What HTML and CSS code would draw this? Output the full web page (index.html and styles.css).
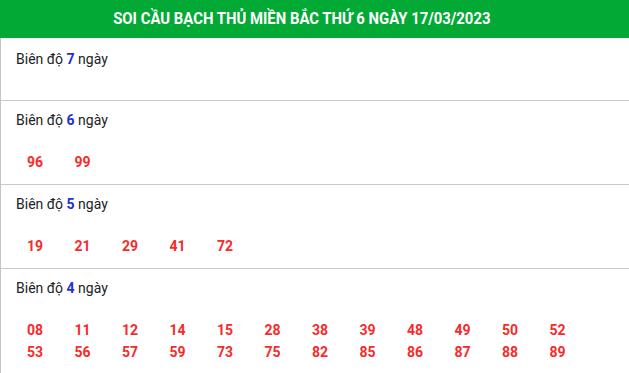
FILE: index.html
```html
<!DOCTYPE html>
<html lang="vi">
<head>
<meta charset="utf-8">
<link rel="stylesheet" href="styles.css">
</head>
<body>
<div class="box">
  <div class="head"><h2 class="title">SOI CẦU BẠCH THỦ MIỀN BẮC THỨ 6 NGÀY 17/03/2023</h2></div>
  <div class="row row-first">
    <div class="label">Biên độ <b>7</b> ngày</div>
    <div class="nums"></div>
  </div>
  <div class="row">
    <div class="label">Biên độ <b>6</b> ngày</div>
    <div class="nums"><span>96</span><span>99</span></div>
  </div>
  <div class="row">
    <div class="label">Biên độ <b>5</b> ngày</div>
    <div class="nums"><span>19</span><span>21</span><span>29</span><span>41</span><span>72</span></div>
  </div>
  <div class="row">
    <div class="label">Biên độ <b>4</b> ngày</div>
    <div class="nums">
      <span>08</span><span>11</span><span>12</span><span>14</span><span>15</span><span>28</span><span>38</span><span>39</span><span>48</span><span>49</span><span>50</span><span>52</span>
      <span>53</span><span>56</span><span>57</span><span>59</span><span>73</span><span>75</span><span>82</span><span>85</span><span>86</span><span>87</span><span>88</span><span>89</span>
    </div>
  </div>
</div>
</body>
</html>
```
FILE: styles.css
```css
html, body {
  margin: 0;
  padding: 0;
  background: #fff;
}
body {
  font-family: Roboto, "Liberation Sans", Arial, sans-serif;
  color: #222;
}
.box {
  border-left: 1px solid #c4c4c4;
}
.head {
  background: #02a935;
  height: 38px;
  display: flex;
  align-items: center;
  justify-content: center;
  padding-right: 26px;
  margin-left: -1px;
}
.title {
  margin: 0;
  color: #fff;
  font-size: 16px;
  font-weight: 700;
  line-height: 20px;
  transform: scaleX(0.93);
  white-space: nowrap;
}
.row {
  padding: 9px 0 11px;
  border-bottom: 1px solid #c8c8c8;
}
.row-first {
  padding: 11px 0 10px;
}
.label {
  font-size: 14px;
  line-height: 20px;
  padding-left: 15px;
  color: #222;
}
.label b {
  color: #1c2fd8;
  font-weight: 700;
}
.nums {
  margin-top: 21px;
  padding-left: 26px;
  display: grid;
  grid-template-columns: repeat(12, 47.5px);
}
.nums span {
  font-size: 14px;
  line-height: 22px;
  font-weight: 700;
  color: #f72a2a;
}
```
